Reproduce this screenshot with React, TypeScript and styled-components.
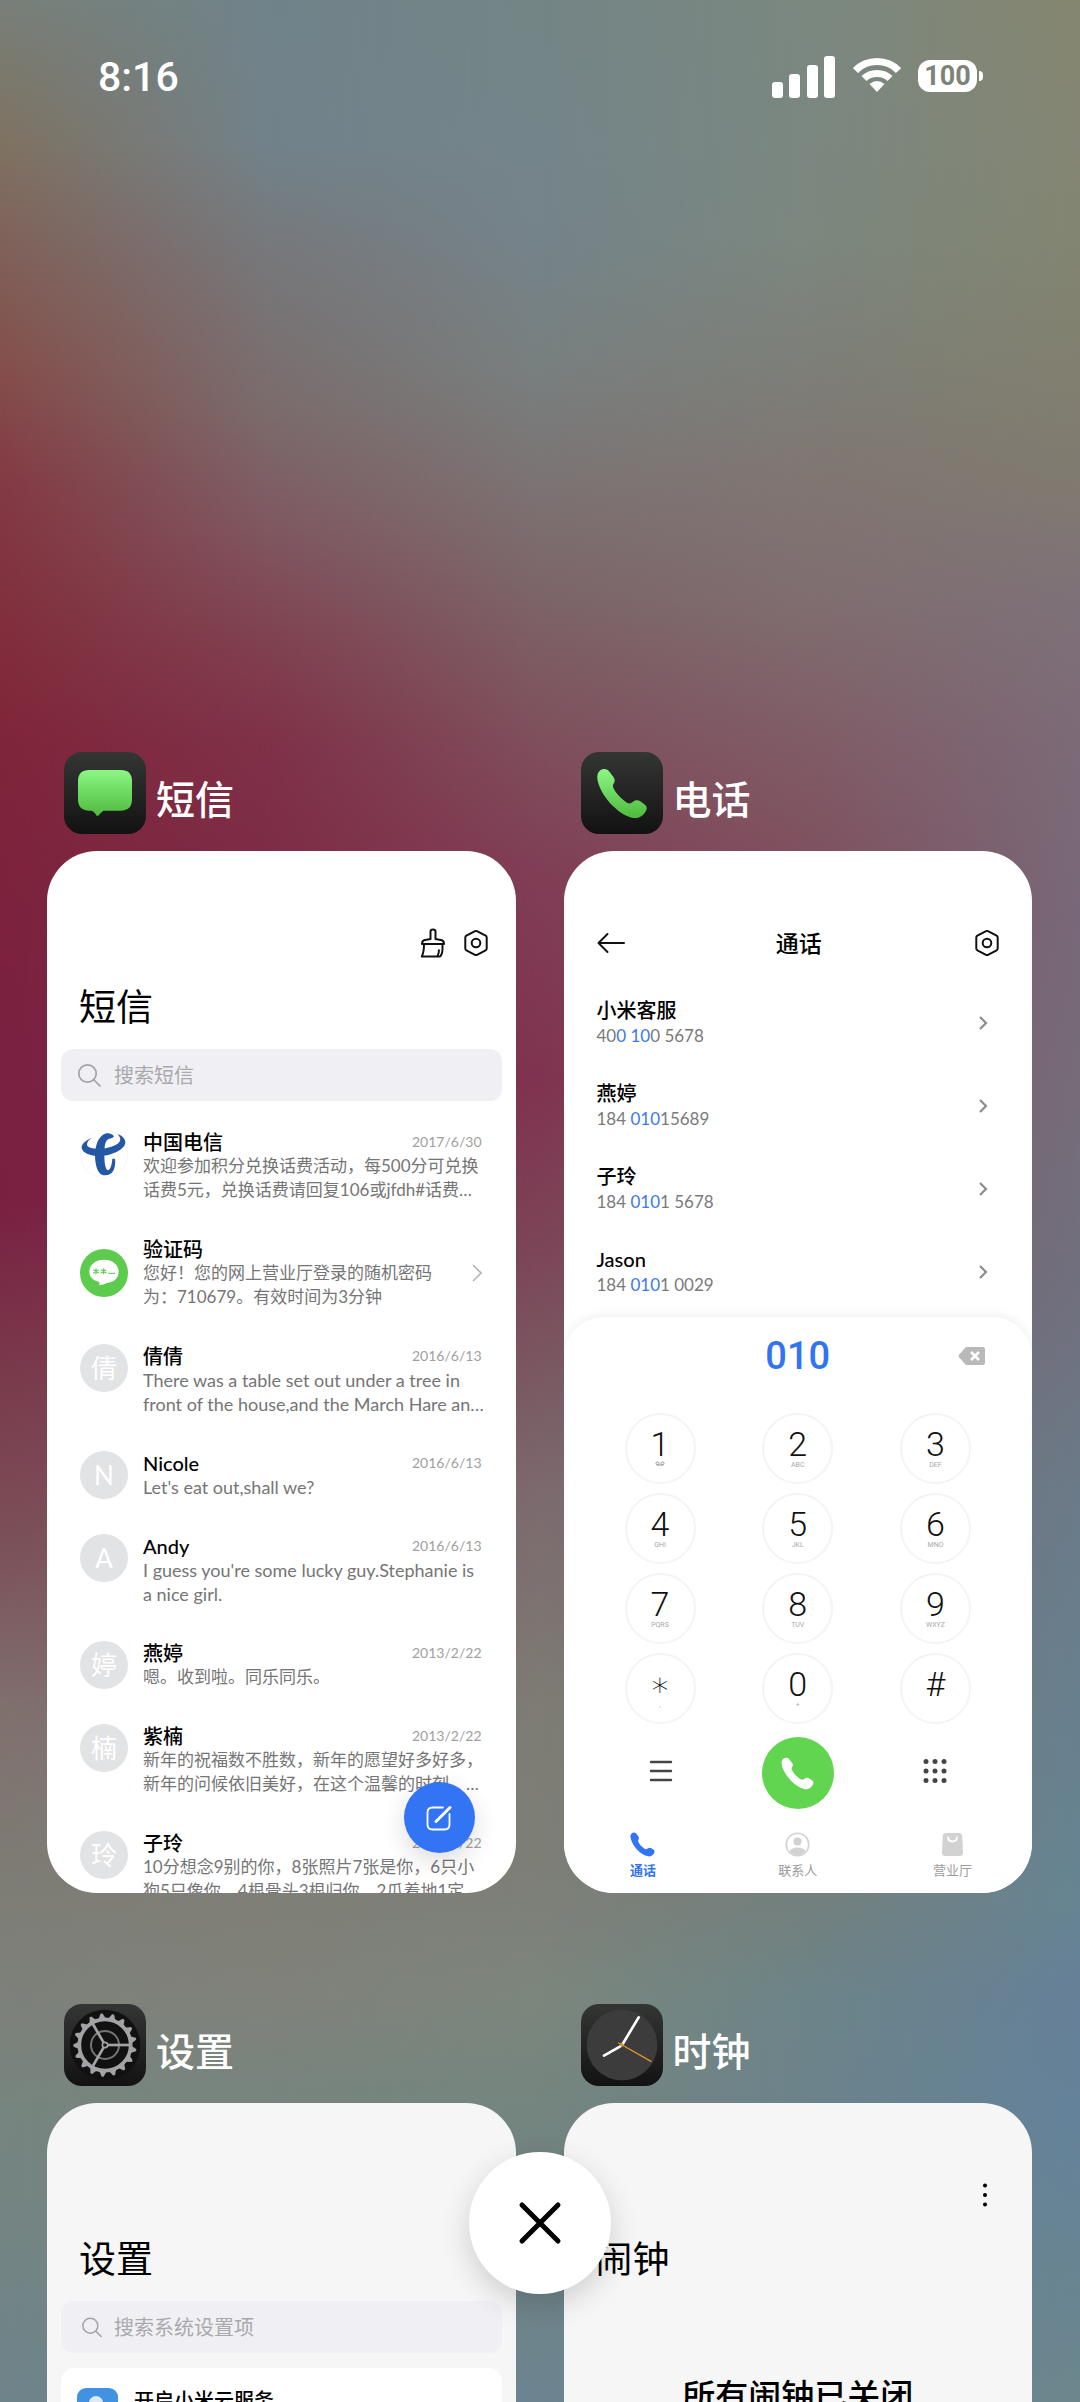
import React, { useState } from "react";
import styled, { createGlobalStyle } from "styled-components";

const GlobalStyle = createGlobalStyle`
  * {
    box-sizing: border-box;
  }
  body {
    margin: 0;
    font-family: Lato, "Noto Sans CJK SC", sans-serif;
    color: #000;
  }
  button {
    border: none;
    padding: 0;
    background: none;
    color: inherit;
    font: inherit;
    cursor: pointer;
  }
  h1, h2, p, ul {
    margin: 0;
    padding: 0;
    font-weight: normal;
  }
  ul {
    list-style: none;
  }
  svg {
    display: block;
    flex: none;
  }
`;

// Wallpaper colours, one vertical gradient per column, blended left to right.
const wallpaper = [
  "#788078 0%, #7f7262 6%, #80625a 10%, #85504c 15%, #843a44 20%, #82303e 25%, #7f253a 31%, #7a2140 42%, #7a2042 50%, #7a3a4c 57%, #7c5058 64%, #80706e 71%, #7e7e76 79%, #7d817a 83%, #77857f 88%, #6f848a 100%",
  "#70838a 0%, #72828a 6%, #77777a 11%, #7b6c6c 17%, #7f5860 22%, #80404f 27%, #7f3148 31%, #7e2c46 36%, #7c2a48 50%, #7c5058 62%, #7e7c74 75%, #80827a 83%, #76857f 88%, #6c8490 100%",
  "#748586 0%, #74858a 6%, #75838a 10%, #788080 15%, #7c7474 20%, #7c6468 25%, #7f4f5c 31%, #803f56 36%, #803350 45%, #7c4658 52%, #7a5c64 58%, #7c6a6e 62%, #7e7c74 71%, #7d8078 79%, #7c867c 83%, #74857f 88%, #6c8490 100%",
  "#7b8880 0%, #7b8780 6%, #7c877e 10%, #7d7f78 15%, #807672 20%, #806e70 25%, #805c66 31%, #80505f 36%, #7a5c68 50%, #746c74 60%, #74807e 79%, #6c8488 83%, #6c838c 88%, #6c8490 100%",
  "#85866f 0%, #848673 6%, #828571 10%, #828070 15%, #807a70 20%, #7d7178 25%, #7c6a78 31%, #786878 38%, #766c79 46%, #70707e 54%, #6b7a88 62%, #68808e 71%, #668492 79%, #668098 83%, #64829a 88%, #6c868c 100%",
];

const Root = styled.div`
  position: relative;
  height: 100vh;
  overflow: hidden;
  isolation: isolate;
`;

const Wash = styled.div<{ stops: string; from: number }>`
  position: absolute;
  inset: 0;
  z-index: -1;
  background: linear-gradient(to bottom, ${(p) => p.stops});
  mask-image: ${(p) =>
    p.from < 0
      ? "none"
      : `linear-gradient(to right, transparent ${p.from}%, #000 ${p.from + 25}%)`};
`;

const StatusBar = styled.header`
  display: flex;
  align-items: flex-start;
  justify-content: space-between;
  height: 98px;
  padding: 56px 97px 0 98px;
  color: #fff;
`;
const Time = styled.time`
  font: 500 41px/43px Roboto, sans-serif;
`;
const StatusIcons = styled.div`
  display: flex;
  align-items: flex-start;
  gap: 17px;
`;
const Battery = styled.div`
  display: flex;
  align-items: center;
  gap: 2px;
  padding-top: 4px;
`;
const BatteryBody = styled.span`
  width: 59px;
  height: 32px;
  border-radius: 12px;
  background: #fff;
  color: #7c8478;
  font: 700 27px/32px Roboto, sans-serif;
  text-align: center;
`;
const BatteryTip = styled.span`
  width: 4px;
  height: 10px;
  border-radius: 0 5px 5px 0;
  background: #fff;
`;

const Recents = styled.main`
  display: grid;
  grid-template-columns: 1fr 1fr;
  column-gap: 48px;
  row-gap: 111px;
  padding: 654px 48px 0 47px;
`;
const Task = styled.section`
  display: flex;
  flex-direction: column;
  gap: 17px;
  min-width: 0;
`;
const TaskHeader = styled.header`
  display: flex;
  align-items: center;
  gap: 10px;
  padding-left: 17px;
  color: #fff;
`;
const TaskName = styled.h2`
  padding-top: 12px;
  font-size: 39px;
  line-height: 44px;
  font-weight: 500;
`;
const Card = styled.div<{ tint?: string }>`
  position: relative;
  height: 1042px;
  overflow: hidden;
  border-radius: 50px;
  background: ${(p) => p.tint || "#fff"};
`;
const Toolbar = styled.div`
  display: flex;
  align-items: center;
  justify-content: flex-end;
  gap: 16px;
  height: 118px;
  padding: 66px 26px 0;
`;
const Title = styled.h1`
  padding: 12px 32px 16px;
  font-size: 37px;
  line-height: 52px;
`;
const SearchBox = styled.label`
  display: flex;
  align-items: center;
  gap: 12px;
  height: 52px;
  margin: 0 14px;
  padding: 0 16px;
  border-radius: 12px;
  background: #f0f0f4;
  color: #a2a2a6;

  input {
    flex: 1;
    min-width: 0;
    padding: 0;
    border: none;
    outline: none;
    background: none;
    font: inherit;
    font-size: 20px;
  }
  input::placeholder {
    color: #a9a9ac;
    opacity: 1;
  }
`;

const MessageList = styled.ul`
  padding-top: 12px;
`;
const MessageRow = styled.li<{ centered?: boolean }>`
  display: flex;
  align-items: ${(p) => (p.centered ? "center" : "flex-start")};
  gap: 15px;
  padding: 17px 34px 18px 33px;
`;
const Avatar = styled.span<{ bare?: boolean }>`
  display: flex;
  flex: none;
  align-items: center;
  justify-content: center;
  width: 48px;
  height: 48px;
  border-radius: 50%;
  background: ${(p) => (p.bare ? "none" : "#e2e3e5")};
  color: #fff;
  font-size: 26px;
  line-height: 48px;
`;
const MessageBody = styled.div`
  flex: 1;
  min-width: 0;
`;
const MessageHead = styled.div`
  display: flex;
  align-items: center;
  justify-content: space-between;
  height: 24px;
`;
const Name = styled.span`
  font-size: 20px;
  line-height: 24px;
  font-weight: 500;
`;
const MessageDate = styled.time`
  color: #a0a0a0;
  font-size: 14px;
  line-height: 24px;
`;
const Line = styled.p<{ latin?: boolean }>`
  color: #757575;
  font-size: ${(p) => (p.latin ? 18 : 17)}px;
  line-height: 24px;
  white-space: nowrap;
`;
const ComposeButton = styled.button`
  position: absolute;
  right: 41px;
  bottom: 40px;
  display: flex;
  align-items: center;
  justify-content: center;
  width: 71px;
  height: 71px;
  border-radius: 50%;
  background: #3274f4;
  box-shadow: 0 8px 24px rgba(0, 0, 0, 0.14);
  color: #fff;
`;

const CallBar = styled.div`
  display: grid;
  grid-template-columns: 28px 1fr 28px;
  align-items: center;
  height: 118px;
  padding: 66px 31px 0 33px;
  box-sizing: border-box;
  text-align: center;
`;
const CallTitle = styled.h1`
  font-size: 23px;
  line-height: 32px;
  font-weight: 500;
`;
const ContactList = styled.ul`
  padding-top: 12px;
`;
const ContactRow = styled.li`
  display: flex;
  align-items: center;
  justify-content: space-between;
  height: 83px;
  padding: 0 42px 0 33px;
`;
const ContactName = styled.div`
  font-size: 20px;
  line-height: 25px;
  font-weight: 500;
`;
const ContactNumber = styled.div`
  color: #7a7a7a;
  font-size: 17px;
  line-height: 25px;

  em {
    color: #3a78ee;
    font-style: normal;
  }
`;
const Dialer = styled.div`
  position: absolute;
  inset: 466px 0 0;
  border-radius: 40px 40px 0 0;
  background: #fff;
  box-shadow: 0 -3px 10px rgba(0, 0, 0, 0.06);
`;
const Entry = styled.div`
  display: grid;
  grid-template-columns: 28px 1fr 28px;
  align-items: center;
  height: 78px;
  padding: 0 46px;
`;
const EntryNumber = styled.output`
  grid-column: 2;
  color: #3274f0;
  font: 500 38px/48px Roboto, sans-serif;
  text-align: center;
`;
const Keypad = styled.div`
  display: grid;
  grid-template-columns: repeat(3, 71px);
  justify-content: space-between;
  row-gap: 9px;
  padding: 18px 61px 0;
`;
const Key = styled.button`
  display: flex;
  flex-direction: column;
  align-items: center;
  height: 71px;
  padding-top: 12px;
  border: 2px solid #f4f4f4;
  border-radius: 50%;
  color: #111;
  font: 300 34px/34px Roboto, "DejaVu Sans", sans-serif;

  small {
    display: flex;
    justify-content: center;
    height: 8px;
    color: #a8a8a8;
    font-size: 7px;
    line-height: 8px;
    font-weight: 400;
  }
`;
const Actions = styled.div`
  display: grid;
  grid-template-columns: repeat(3, 72px);
  justify-content: space-between;
  padding: 13px 61px 0;
`;
const ActionButton = styled.button<{ call?: boolean }>`
  display: flex;
  align-items: center;
  justify-content: center;
  height: 72px;
  border-radius: 50%;
  background: ${(p) => (p.call ? "#62d550" : "none")};
  color: ${(p) => (p.call ? "#fff" : "#444")};
`;
const Tabs = styled.nav`
  display: grid;
  grid-template-columns: repeat(3, 1fr);
  padding: 23px 2px 0;
`;
const Tab = styled.button<{ active?: boolean }>`
  display: flex;
  flex-direction: column;
  align-items: center;
  gap: 3px;
  color: ${(p) => (p.active ? "#3274f4" : "#9c9c9c")};
  font-size: 13px;
  line-height: 20px;
  font-weight: ${(p) => (p.active ? 700 : 400)};
`;

const SettingsGroup = styled.div`
  display: flex;
  gap: 16px;
  margin: 15px 14px 0;
  padding: 20px 16px;
  border-radius: 14px;
  background: #fff;
`;
const SettingsLabel = styled.span`
  font-size: 20px;
  line-height: 24px;
  font-weight: 500;
`;
const AlarmNotice = styled.p`
  padding-top: 74px;
  font-size: 33px;
  line-height: 40px;
  font-weight: 500;
  text-align: center;
`;

const CloseButton = styled.button`
  position: absolute;
  bottom: 108px;
  left: 50%;
  display: flex;
  align-items: center;
  justify-content: center;
  width: 142px;
  height: 142px;
  margin-left: -71px;
  border-radius: 50%;
  background: #fff;
  box-shadow: 0 10px 30px rgba(0, 0, 0, 0.16);
`;

const handset =
  "M58 55C66 49 78 50 84 58L98 76C103 84 102 90 97 97C94 103 97 110 104 120C114 134 128 146 138 152C144 156 150 154 156 149C164 143 172 144 180 149L192 158C199 164 199 172 193 180C184 194 172 200 158 198C112 190 56 130 49 80C48 70 50 62 58 55Z";

function Handset({ size }: { size: number }) {
  return (
    <svg width={size} height={size} viewBox="46 48 154 154" fill="currentColor">
      <path d={handset} />
    </svg>
  );
}

function HexGear() {
  return (
    <svg width="28" height="28" viewBox="0 0 28 28" fill="none" stroke="#111" strokeWidth="2">
      <path d="M13 2.200q1-.6 2 0l8.600 4.500q1.100.6 1.100 1.800v11q0 1.200-1.100 1.800L15 25.800q-1 .6-2 0l-8.600-4.500q-1.100-.6-1.100-1.800v-11q0-1.200 1.100-1.800Z" />
      <circle cx="14" cy="14" r="4.300" />
    </svg>
  );
}

function BrushIcon() {
  return (
    <svg width="26" height="30" viewBox="0 0 26 30" fill="none" stroke="#111" strokeWidth="2" strokeLinejoin="round">
      <path d="M10.500 11V3.500Q10.500 1.500 13 1.500T15.500 3.500V11L22 12.300Q24 13 24 16H2Q2 13 4 12.300Z" />
      <path d="M4 16.500Q4 24 1.800 28.500H20Q23 26.500 22.500 16.500M17.500 28Q19 25.500 19 21.500" />
    </svg>
  );
}

function SearchIcon({ small }: { small?: boolean }) {
  return (
    <svg
      width="25"
      height="25"
      viewBox={small ? "-5 -2 29 29" : "0 0 25 25"}
      fill="none"
      stroke="currentColor"
      strokeWidth="1.700"
      strokeLinecap="round"
    >
      <circle cx="10.500" cy="10.500" r="8.700" />
      <path d="M17 17L23 23" />
    </svg>
  );
}

function Chevron({ large }: { large?: boolean }) {
  return large ? (
    <svg width="10" height="18" viewBox="0 0 10 18" fill="none" stroke="#b4b4b4" strokeWidth="1.600">
      <path d="M1 1L9 9L1 17" />
    </svg>
  ) : (
    <svg width="14" height="14" viewBox="0 0 14 14" fill="none" stroke="#8c8c8c" strokeWidth="2.200">
      <path d="M4 1L10 7L4 13" />
    </svg>
  );
}

function AppIcon({ kind }: { kind: string }) {
  return (
    <svg width="82" height="82" viewBox="0 0 246 246">
      <defs>
        <linearGradient id={`${kind}-base`} x1="0" y1="0" x2="0" y2="1">
          <stop offset="0" stopColor="#343634" />
          <stop offset="1" stopColor="#121212" />
        </linearGradient>
        <linearGradient id={`${kind}-green`} x1="0" y1="0" x2="0" y2="1">
          <stop offset="0" stopColor="#8cf783" />
          <stop offset="1" stopColor="#4fb93f" />
        </linearGradient>
      </defs>
      <rect width="246" height="246" rx="54" fill={`url(#${kind}-base)`} />
      {kind === "sms" && (
        <path
          fill={`url(#${kind}-green)`}
          d="M76 54H170Q204 54 204 88V142Q204 176 170 176H118Q108 184 104 190Q100 194 97 190Q92 180 84 176H76Q42 176 42 142V88Q42 54 76 54Z"
        />
      )}
      {kind === "phone" && <path fill={`url(#${kind}-green)`} d={handset} />}
      {kind === "settings" && (
        <g>
          <circle cx="123" cy="123" r="106" fill="#111" />
          <g stroke="#a3a3a6" fill="none">
            <circle cx="123" cy="123" r="77" strokeWidth="11" />
            <circle cx="123" cy="123" r="42" strokeWidth="6" stroke="#747476" />
            {[0, 120, 240].map((a) => (
              <path key={a} d="M132 123H200" strokeWidth="8" transform={`rotate(${a} 123 123)`} />
            ))}
            <circle cx="123" cy="123" r="8" strokeWidth="5" />
          </g>
          {Array.from({ length: 17 }, (_, i) => (
            <path
              key={i}
              d="M112 44L120 28H126L134 44Z"
              fill="#a3a3a6"
              transform={`rotate(${(i * 360) / 17 + 15} 123 123)`}
            />
          ))}
        </g>
      )}
      {kind === "clock" && (
        <g strokeLinecap="round">
          <circle cx="123" cy="123" r="106" fill="#3c3c3c" />
          <path d="M125 120L173 40M118 127L69 155" stroke="#fff" strokeWidth="8" />
          <path d="M113 117L210 172" stroke="#dc962e" strokeWidth="4" />
          <circle cx="123" cy="123" r="5" fill="#dc962e" />
        </g>
      )}
    </svg>
  );
}

function TelecomLogo() {
  return (
    <svg width="48" height="48" viewBox="0 0 144 144" fill="#2458a4">
      <circle cx="72" cy="72" r="71" fill="#fff" stroke="#f0f0f0" strokeWidth="2" />
      <path d="M35 24C14 32 4 44 5 54C8 70 34 79 62 78C96 76 134 58 136 38C136 26 128 18 112 11C120 20 124 28 118 36C108 48 84 56 58 56C36 56 22 52 21 44C21 36 26 30 35 24Z" />
      <path d="M102 18C92 8 78 8 68 15C52 27 46 50 45 74C45 98 50 118 58 128C66 138 84 138 94 130C104 120 107 104 105 86L97 86C96 102 92 118 84 121C76 118 73 98 73 74C73 52 74 30 88 26C96 24 100 24 102 18Z" />
    </svg>
  );
}

function CodeLogo() {
  return (
    <svg width="48" height="48" viewBox="0 0 144 144">
      <circle cx="72" cy="72" r="72" fill="#5ccb4e" />
      <path d="M72 32C96 32 116 46 116 68C116 88 100 100 82 101Q72 108 56 109Q60 104 57 98C40 94 28 84 28 68C28 46 48 32 72 32Z" fill="#fff" />
      <g stroke="#5ccb4e" strokeWidth="3.500">
        <path d="M48 58V76M40 62L56 72M56 62L40 72M71 58V76M63 62L79 72M79 62L63 72" />
        <path d="M85 73H105" strokeWidth="3" />
      </g>
    </svg>
  );
}

const messages = [
  {
    name: "中国电信",
    date: "2017/6/30",
    logo: <TelecomLogo />,
    lines: ["欢迎参加积分兑换话费活动，每500分可兑换", "话费5元，兑换话费请回复106或jfdh#话费…"],
  },
  {
    name: "验证码",
    logo: <CodeLogo />,
    lines: ["您好！您的网上营业厅登录的随机密码", "为：710679。有效时间为3分钟"],
  },
  {
    name: "倩倩",
    date: "2016/6/13",
    latin: true,
    lines: ["There was a table set out under a tree in", "front of the house,and the March Hare an…"],
  },
  {
    name: "Nicole",
    initial: "N",
    date: "2016/6/13",
    latin: true,
    lines: ["Let's eat out,shall we?"],
  },
  {
    name: "Andy",
    initial: "A",
    date: "2016/6/13",
    latin: true,
    lines: ["I guess you're some lucky guy.Stephanie is", "a nice girl."],
  },
  { name: "燕婷", date: "2013/2/22", lines: ["嗯。收到啦。同乐同乐。"] },
  {
    name: "紫楠",
    date: "2013/2/22",
    lines: ["新年的祝福数不胜数，新年的愿望好多好多，", "新年的问候依旧美好，在这个温馨的时刻，…"],
  },
  {
    name: "子玲",
    date: "2013/2/22",
    lines: ["10分想念9别的你，8张照片7张是你，6只小", "狗5只像你，4根骨头3根归你，2瓜着地1定"],
  },
];

const contacts = [
  { name: "小米客服", number: ["40", "0 10", "0 5678"] },
  { name: "燕婷", number: ["184 ", "010", "15689"] },
  { name: "子玲", number: ["184 ", "010", "1 5678"] },
  { name: "Jason", number: ["184 ", "010", "1 0029"] },
];

const keys = [
  ["1", ""],
  ["2", "ABC"],
  ["3", "DEF"],
  ["4", "GHI"],
  ["5", "JKL"],
  ["6", "MNO"],
  ["7", "PQRS"],
  ["8", "TUV"],
  ["9", "WXYZ"],
  ["∗", ","],
  ["0", "+"],
  ["#", ""],
];

function Messages() {
  return (
    <Card>
      <Toolbar>
        <button aria-label="清理">
          <BrushIcon />
        </button>
        <button aria-label="设置">
          <HexGear />
        </button>
      </Toolbar>
      <Title>短信</Title>
      <SearchBox>
        <SearchIcon />
        <input type="search" placeholder="搜索短信" aria-label="搜索短信" />
      </SearchBox>
      <MessageList>
        {messages.map((m) => (
          <MessageRow key={m.name} centered={!m.date}>
            <Avatar bare={!!m.logo}>{m.logo || m.initial || m.name[1]}</Avatar>
            <MessageBody>
              <MessageHead>
                <Name>{m.name}</Name>
                {m.date && <MessageDate>{m.date}</MessageDate>}
              </MessageHead>
              {m.lines.map((line) => (
                <Line key={line} latin={m.latin}>
                  {line}
                </Line>
              ))}
            </MessageBody>
            {!m.date && <Chevron large />}
          </MessageRow>
        ))}
      </MessageList>
      <ComposeButton aria-label="新建短信">
        <svg width="28" height="28" viewBox="0 0 28 28" fill="none" stroke="currentColor" strokeWidth="1.800" strokeLinecap="round">
          <path d="M18 3.500H7.500Q2.500 3.500 2.500 8.500V20.500Q2.500 25.500 7.500 25.500H19.500Q24.500 25.500 24.500 20.500V10" />
          <path d="M11 17.500L25 3.500" strokeWidth="3" />
        </svg>
      </ComposeButton>
    </Card>
  );
}

function Phone() {
  const [entry, setEntry] = useState("010");

  return (
    <Card>
      <CallBar>
        <button aria-label="返回">
          <svg width="28" height="22" viewBox="0 0 28 22" fill="none" stroke="#111" strokeWidth="2" strokeLinecap="round" strokeLinejoin="round">
            <path d="M27 11H1.500M10.500 2L1.500 11L10.500 20" />
          </svg>
        </button>
        <CallTitle>通话</CallTitle>
        <button aria-label="设置">
          <HexGear />
        </button>
      </CallBar>
      <ContactList>
        {contacts.map(({ name, number }) => (
          <ContactRow key={name}>
            <div>
              <ContactName>{name}</ContactName>
              <ContactNumber>
                {number[0]}
                <em>{number[1]}</em>
                {number[2]}
              </ContactNumber>
            </div>
            <Chevron />
          </ContactRow>
        ))}
      </ContactList>
      <Dialer>
        <Entry>
          <EntryNumber>{entry}</EntryNumber>
          <button aria-label="删除" onClick={() => setEntry(entry.slice(0, -1))}>
            <svg width="28" height="20" viewBox="0 0 28 20">
              <path d="M8 1H25Q27 1 27 3V17Q27 19 25 19H8L1.200 11.500Q0 10 1.200 8.500Z" fill="#b9b9b9" />
              <path d="M13 6L21 14M21 6L13 14" stroke="#fff" strokeWidth="2.600" />
            </svg>
          </button>
        </Entry>
        <Keypad>
          {keys.map(([digit, letters]) => (
            <Key key={digit} onClick={() => setEntry(entry + digit)}>
              <span>{digit}</span>
              <small>
                {digit === "1" ? (
                  <svg width="10" height="5" viewBox="0 0 10 5" fill="none" stroke="#999">
                    <circle cx="2.500" cy="2.500" r="1.500" />
                    <circle cx="7.500" cy="2.500" r="1.500" />
                    <path d="M2 4H8" />
                  </svg>
                ) : (
                  letters
                )}
              </small>
            </Key>
          ))}
        </Keypad>
        <Actions>
          <ActionButton aria-label="菜单">
            <svg width="24" height="26" viewBox="0 0 24 26" stroke="currentColor" strokeWidth="2.400" strokeLinecap="round">
              <path d="M2 2H22M2 11H22M2 20H22" />
            </svg>
          </ActionButton>
          <ActionButton call aria-label="拨打">
            <Handset size={33} />
          </ActionButton>
          <ActionButton aria-label="拨号盘">
            <svg width="24" height="28" viewBox="0 0 24 28" fill="currentColor">
              {[2, 11.5, 21].map((y) =>
                [3, 12, 21].map((x) => <circle key={`${x}-${y}`} cx={x} cy={y + 0.5} r="2.500" />)
              )}
            </svg>
          </ActionButton>
        </Actions>
        <Tabs>
          <Tab active>
            <Handset size={25} />
            通话
          </Tab>
          <Tab>
            <svg width="25" height="25" viewBox="0 0 25 25">
              <circle cx="12.500" cy="12.500" r="11.300" fill="none" stroke="#d2d2d2" strokeWidth="1.600" />
              <circle cx="12.500" cy="9.500" r="4" fill="#d2d2d2" />
              <path d="M4.500 19Q7 15.500 12.500 15.500T20.500 19Q17.500 23 12.500 23T4.500 19Z" fill="#d2d2d2" />
            </svg>
            联系人
          </Tab>
          <Tab>
            <svg width="25" height="25" viewBox="0 0 25 25">
              <path d="M5.500 1H19.500Q22 1 22.200 3.500L23 20.500Q23 24 20 24H5Q2 24 2 20.500L2.800 3.500Q3 1 5.500 1Z" fill="#d2d2d2" />
              <path d="M8 4.500Q8 9.500 12.500 9.500T17 4.500" fill="none" stroke="#fff" strokeWidth="1.800" />
            </svg>
            营业厅
          </Tab>
        </Tabs>
      </Dialer>
    </Card>
  );
}

function Settings() {
  return (
    <Card tint="#f6f6f7">
      <Toolbar />
      <Title>设置</Title>
      <SearchBox>
        <SearchIcon small />
        <input type="search" placeholder="搜索系统设置项" aria-label="搜索系统设置项" />
      </SearchBox>
      <SettingsGroup>
        <svg width="41" height="41" viewBox="0 0 41 41">
          <rect width="41" height="41" rx="9" fill="#4292e2" />
          <circle cx="19" cy="15" r="7" fill="#dfe9f4" />
          <path d="M7 35Q8 22 19 22T31 35Z" fill="#fff" />
        </svg>
        <SettingsLabel>开启小米云服务</SettingsLabel>
      </SettingsGroup>
    </Card>
  );
}

function Clock() {
  return (
    <Card tint="#f6f6f6">
      <Toolbar>
        <button aria-label="更多">
          <svg width="40" height="24" viewBox="0 0 40 24">
            <circle cx="19" cy="2.500" r="2" />
            <circle cx="19" cy="12" r="2" />
            <circle cx="19" cy="21.500" r="2" />
          </svg>
        </button>
      </Toolbar>
      <Title>闹钟</Title>
      <AlarmNotice>所有闹钟已关闭</AlarmNotice>
    </Card>
  );
}

const tasks = [
  { kind: "sms", name: "短信", Preview: Messages },
  { kind: "phone", name: "电话", Preview: Phone },
  { kind: "settings", name: "设置", Preview: Settings },
  { kind: "clock", name: "时钟", Preview: Clock },
];

export default function App() {
  return (
    <Root>
      <GlobalStyle />
      {wallpaper.map((stops, i) => (
        <Wash key={i} stops={stops} from={(i - 1) * 25} />
      ))}
      <StatusBar>
        <Time>8:16</Time>
        <StatusIcons>
          <svg width="64" height="42" viewBox="0 0 64 42" fill="#fff">
            <rect x="0" y="26" width="11" height="16" rx="3" />
            <rect x="17" y="18" width="11" height="24" rx="3" />
            <rect x="35" y="9" width="11" height="33" rx="3" />
            <rect x="52" y="0" width="11" height="42" rx="3" />
          </svg>
          <svg width="48" height="38" viewBox="0 0 48 38">
            <g fill="none" stroke="#fff" strokeWidth="7">
              <path d="M2.500 14.500Q11 5.500 24 5.500T45.500 14.500" />
              <path d="M11 22.500Q16 17.500 24 17.500T37 22.500" />
            </g>
            <path d="M24 36L16.500 28Q24 22 31.500 28Z" fill="#fff" />
          </svg>
          <Battery>
            <BatteryBody>100</BatteryBody>
            <BatteryTip />
          </Battery>
        </StatusIcons>
      </StatusBar>
      <Recents>
        {tasks.map(({ kind, name, Preview }) => (
          <Task key={kind}>
            <TaskHeader>
              <AppIcon kind={kind} />
              <TaskName>{name}</TaskName>
            </TaskHeader>
            <Preview />
          </Task>
        ))}
      </Recents>
      <CloseButton aria-label="全部清除">
        <svg width="46" height="46" viewBox="0 0 46 46" stroke="#000" strokeWidth="5" strokeLinecap="round">
          <path d="M5 5L41 41M41 5L5 41" />
        </svg>
      </CloseButton>
    </Root>
  );
}
